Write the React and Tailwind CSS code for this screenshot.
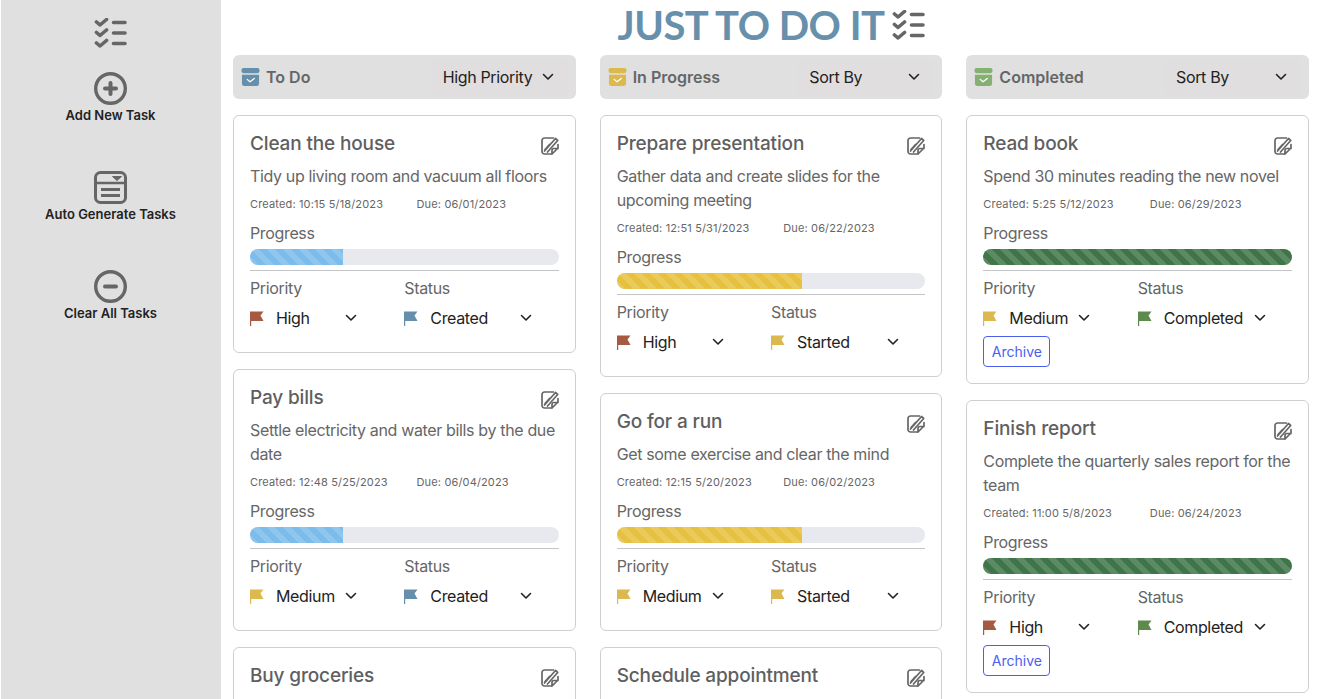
import React from 'react';

const FLAGS = {
  High: 'text-[#a65a42]',
  Medium: 'text-[#dcb94f]',
  Created: 'text-[#658fab]',
  Started: 'text-[#dcb94f]',
  Completed: 'text-[#5e8a4e]',
};

const COLUMNS = [
  {
    name: 'To Do',
    iconColor: 'text-[#658fab]',
    sort: 'High Priority',
    tasks: [
      { title: 'Clean the house', desc: 'Tidy up living room and vacuum all floors', created: '10:15 5/18/2023', due: '06/01/2023', priority: 'High', status: 'Created' },
      { title: 'Pay bills', desc: 'Settle electricity and water bills by the due date', created: '12:48 5/25/2023', due: '06/04/2023', priority: 'Medium', status: 'Created' },
      { title: 'Buy groceries' },
    ],
  },
  {
    name: 'In Progress',
    iconColor: 'text-[#dcb94f]',
    sort: 'Sort By',
    tasks: [
      { title: 'Prepare presentation', desc: 'Gather data and create slides for the upcoming meeting', created: '12:51 5/31/2023', due: '06/22/2023', priority: 'High', status: 'Started' },
      { title: 'Go for a run', desc: 'Get some exercise and clear the mind', created: '12:15 5/20/2023', due: '06/02/2023', priority: 'Medium', status: 'Started' },
      { title: 'Schedule appointment' },
    ],
  },
  {
    name: 'Completed',
    iconColor: 'text-[#86b072]',
    sort: 'Sort By',
    tasks: [
      { title: 'Read book', desc: 'Spend 30 minutes reading the new novel', created: '5:25 5/12/2023', due: '06/29/2023', priority: 'Medium', status: 'Completed' },
      { title: 'Finish report', desc: 'Complete the quarterly sales report for the team', created: '11:00 5/8/2023', due: '06/24/2023', priority: 'High', status: 'Completed' },
    ],
  },
];

function ListIcon({ className }) {
  return (
    <svg viewBox="0 0 33 30" className={className} fill="none" stroke="#666" strokeWidth="3.600" strokeLinecap="round" strokeLinejoin="round">
      <path d="M2.500 4l3.500 3 6.500-5.500M2.500 14.500l3.500 3 6.500-5.500M2.500 25l3.500 3 6.500-5.500" />
      <path d="M19.500 4.500h11.500M19.500 15h11.500M19.500 25.500h11.500" />
    </svg>
  );
}

function CircleIcon({ minus }) {
  return (
    <svg viewBox="0 0 33 33" className="w-[33px] h-[33px]" fill="none" stroke="#666">
      <circle cx="16.500" cy="16.500" r="14.800" strokeWidth="3.400" />
      <path d={minus ? 'M11 16.500h11' : 'M11 16.500h11M16.500 11v11'} strokeWidth="4" strokeLinecap="round" />
    </svg>
  );
}

function BoxIcon() {
  return (
    <svg viewBox="0 0 33 33" className="w-[33px] h-[33px]" fill="none" stroke="#666">
      <rect x="1.500" y="1.500" width="30" height="30" rx="5" strokeWidth="3" />
      <path d="M2 12h29" strokeWidth="2.500" />
      <path d="M7 18.500h19M7 24.500h19" strokeWidth="2.800" />
      <path d="M18.500 5.500h9l-4.500 4z" fill="#666" stroke="#666" strokeWidth="1" strokeLinejoin="round" />
    </svg>
  );
}

function ArchiveIcon({ className }) {
  return (
    <svg viewBox="0 0 20 20" className={className} fill="currentColor">
      <rect x="0.500" y="0.500" width="19" height="5.500" rx="2.200" />
      <path d="M1 7.500h18V17a2.500 2.500 0 0 1-2.500 2.500h-13A2.500 2.500 0 0 1 1 17z" />
      <path d="M6.500 12.500l3 2.500 4.500-3.500" fill="none" stroke="#fff" strokeWidth="1.300" strokeLinecap="round" strokeLinejoin="round" />
    </svg>
  );
}

function FlagIcon({ className }) {
  return (
    <svg viewBox="0 0 14 15" className={`w-[14px] h-[15px] ${className}`} fill="currentColor">
      <path d="M0 0.500h13.500l-3 4 3 5.500H1.200v5H0z" />
    </svg>
  );
}

function EditIcon() {
  return (
    <svg viewBox="0 0 18 18" className="w-[18px] h-[18px]" fill="none" stroke="#666" strokeWidth="1.700" strokeLinecap="round" strokeLinejoin="round">
      <path d="M10.500 17H3.500A2.500 2.500 0 0 1 1 14.500v-11A2.500 2.500 0 0 1 3.500 1h9" />
      <path d="M3.500 14L14.500 1.500l2.200 2L6.500 15M8.500 7.500L4 12.500" />
      <path d="M17 7.500v3.500l-6 6v-3.500a2 2 0 0 1 2-2h4" />
    </svg>
  );
}

function Chevron() {
  return (
    <svg viewBox="0 0 12 8" className="w-[12px] h-[8px]" fill="none" stroke="#222" strokeWidth="1.600" strokeLinecap="round" strokeLinejoin="round">
      <path d="M1.500 1.500L6 6l4.500-4.500" />
    </svg>
  );
}

function FieldSelect({ label, value, rowWidth }) {
  return (
    <div className="w-[166.500px]">
      <div className="text-[16px] leading-[24px] text-[#666]">{label}</div>
      <div className={`flex items-center h-[36px] ${rowWidth}`}>
        <FlagIcon className={FLAGS[value]} />
        <span className="ml-[12px] text-[16px] text-[#222]">{value}</span>
        <span className="ml-auto flex"><Chevron /></span>
      </div>
    </div>
  );
}

function Progress({ status }) {
  const styles = {
    Created: 'w-[30%] bg-[#7bbceb]',
    Started: 'w-[60%] bg-[#e6c13f]',
    Completed: 'w-full bg-[#3f7549]',
  };
  return (
    <div className="h-[16px] rounded-[8px] bg-[#e8e9ef] overflow-hidden mt-[4px]">
      <div className={`h-full ${styles[status]} bg-[linear-gradient(45deg,rgba(255,255,255,0.15)_25%,transparent_25%,transparent_50%,rgba(255,255,255,0.15)_50%,rgba(255,255,255,0.15)_75%,transparent_75%,transparent)] bg-[length:16px_16px]`} />
    </div>
  );
}

function TaskCard({ task }) {
  return (
    <div className="border border-[#cfcfcf] rounded-[6px] bg-white p-[16px]">
      <div className="flex items-center justify-between h-[24px]">
        <h2 className="text-[19px] tracking-[-0.15px] font-medium text-[#5f5f5f]">{task.title}</h2>
        <span className="mt-[3px] flex"><EditIcon /></span>
      </div>
      {task.desc && (
        <>
          <p className="mt-[8px] text-[16px] leading-[24px] text-[#666]">{task.desc}</p>
          <div className="flex mt-[8px] text-[11px] leading-[16px] tracking-[0.15px] text-[#666]">
            <span className="w-[166.500px]">Created: {task.created}</span>
            <span>Due: {task.due}</span>
          </div>
          <div className="mt-[9px] text-[16px] leading-[24px] text-[#666]">Progress</div>
          <Progress status={task.status} />
          <div className="h-px bg-[#c4c4c4] mt-[5px] mb-[5px]" />
          <div className="flex">
            <FieldSelect label="Priority" value={task.priority} rowWidth="w-[107px]" />
            <FieldSelect label="Status" value={task.status} rowWidth="w-[128px]" />
          </div>
          {task.status === 'Completed' && (
            <button className="block h-[31px] w-[67px] border border-[#4a5ef0] rounded-[4px] text-[14px] tracking-normal text-[#4a5ef0]">Archive</button>
          )}
        </>
      )}
      {!task.desc && <div className="h-[80px]" />}
    </div>
  );
}

function Column({ column }) {
  return (
    <div className="flex-1 min-w-0 flex flex-col gap-[16px]">
      <div className="h-[44px] rounded-[6px] bg-[#e0e0e0] flex items-center justify-between pl-[8px] pr-[8px]">
        <div className="flex items-center gap-[6px]">
          <ArchiveIcon className={`w-[19px] h-[20px] ${column.iconColor}`} />
          <span className="text-[16px] font-semibold tracking-normal text-[#666]">{column.name}</span>
        </div>
        <div className="w-[137px] h-[36px] rounded-[6px] bg-[#e0dedf] flex items-center justify-between pl-[12px] pr-[14px]">
          <span className="text-[16px] text-[#222]">{column.sort}</span>
          <Chevron />
        </div>
      </div>
      {column.tasks.map((task) => (
        <TaskCard key={task.title} task={task} />
      ))}
    </div>
  );
}

function SideButton({ icon, label }) {
  return (
    <button className="h-[99px] flex flex-col items-center">
      {icon}
      <span className="mt-[1px] text-[13px] leading-[18px] font-semibold text-[#222]">{label}</span>
    </button>
  );
}

export default function App() {
  return (
    <div className="h-screen overflow-hidden flex bg-white font-['Inter',sans-serif]">
      {/* Sidebar */}
      <aside className="ml-px w-[220px] shrink-0 bg-[#e0e0e0] flex flex-col items-center pt-[18px] pr-px">
        <ListIcon className="w-[33px] h-[30px] mb-[24px]" />
        <SideButton icon={<CircleIcon />} label="Add New Task" />
        <SideButton icon={<BoxIcon />} label="Auto Generate Tasks" />
        <SideButton icon={<CircleIcon minus />} label="Clear All Tasks" />
      </aside>

      <main className="flex-1 min-w-0 pl-[12px] pr-[9px] tracking-[-0.35px]">
        <div className="h-[55px] flex items-center justify-center gap-[7px] pb-[5px]">
          <h1 className="font-['Lato',sans-serif] text-[40px] font-bold tracking-[-0.5px] text-[#6690ab]">JUST TO DO IT</h1>
          <ListIcon className="w-[33px] h-[30px]" />
        </div>
        <div className="flex gap-[24px]">
          {COLUMNS.map((column) => (
            <Column key={column.name} column={column} />
          ))}
        </div>
      </main>
    </div>
  );
}
